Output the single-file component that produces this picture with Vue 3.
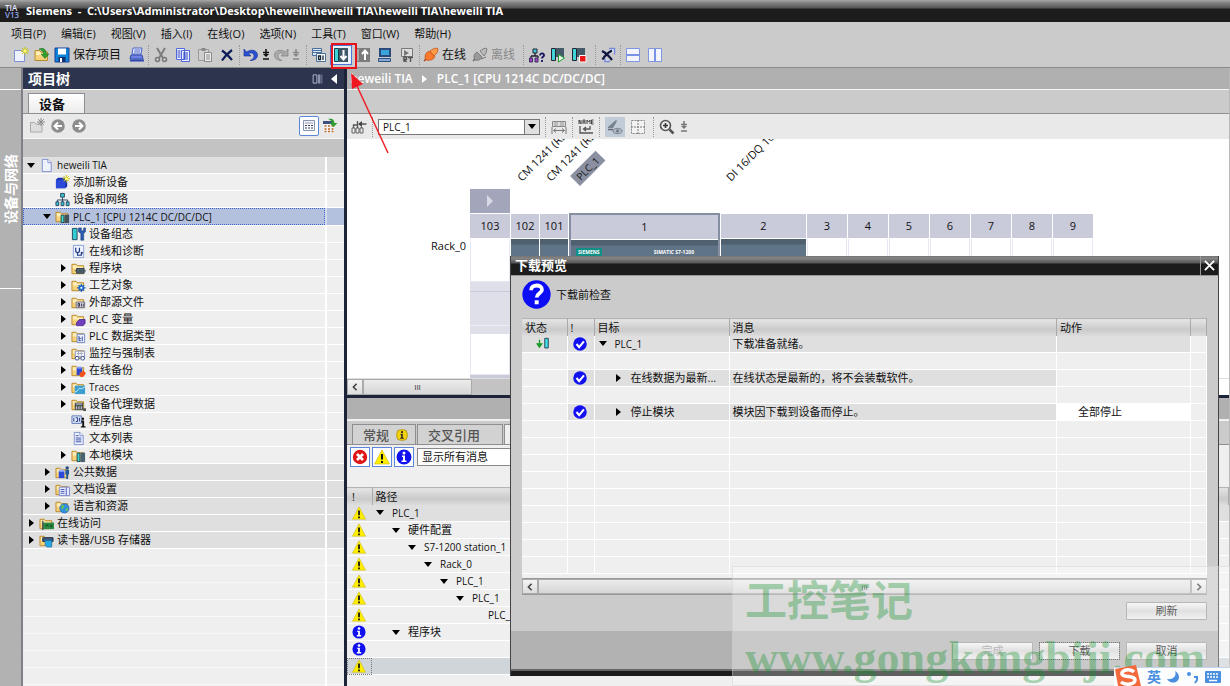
<script setup>
const folder = '<path d="M1 3.5h4.5l1.5 1.500h6.500v8.500h-12.500z" fill="#f6d27a" stroke="#b98a2c"/><path d="M2 4.500h3l1.500 1.500h6v2h-10.500z" fill="#fdeebb"/>'
const page = '<path d="M3.500 1.500h6l3.500 3.500v9.500h-9.500z" fill="#eef2ff" stroke="#7d8fd0"/><path d="M9.500 1.500v3.500h3.500" fill="#fff" stroke="#7d8fd0"/>'
const star = '<path d="M12 0v8M8 4h8M9.200 1.200l5.600 5.600M14.800 1.200l-5.600 5.600" stroke="#c9c400"/><circle cx="12" cy="4" r="1.600" fill="#ffff6a"/>'
const icons = {
  newProject: '<path d="M1.500 3.500h7l3 3v8h-10z" fill="#eef2ff" stroke="#7d8fd0"/>' + star,
  open: folder + '<path d="M5 2c5-2 7 1 7.500 5h2.500l-4 4.500-4-4.500h2.500c0-3-2-4-4.500-5z" fill="#2f9e2f" stroke="#1d6f1d" stroke-width=".5"/>',
  save: '<path d="M1 1h14v14h-14z" fill="#0b84d8" stroke="#1b3f9a"/><path d="M4 1.500h8v6h-8z" fill="#fff"/><path d="M4.500 10h7v5h-7z" fill="#15306f"/><path d="M6 11h2v4h-2z" fill="#fff"/>',
  print: '<path d="M4 1h9l-1 6h-9z" fill="#e9edff" stroke="#4a62c8"/><path d="M5.500 3h6M5 5h6" stroke="#4a62c8"/><path d="M2 8h11l1 4h-13z" fill="#6f83e0" stroke="#3048b0"/><path d="M1 12.500h14v2h-14z" fill="#2f45b0"/>',
  cut: '<path d="M4 1l6 10M12 1l-6 10" stroke="#7d7d7d" stroke-width="2"/><circle cx="4.500" cy="12.500" r="2" fill="none" stroke="#777" stroke-width="1.500"/><circle cx="11.500" cy="12.500" r="2" fill="none" stroke="#777" stroke-width="1.500"/>',
  copy: '<path d="M1.500 1.500h8v11h-8zM6.500 3.500h8v11h-8z" fill="#eef1ff" stroke="#5268d8"/><path d="M8 6h5M8 8h5M8 10h5M8 12h5M2.500 4h3M2.500 6h3M2.500 8h3M2.500 10h3" stroke="#3047c8"/>',
  paste: '<path d="M1.500 2.500h10v11h-10z" fill="#cfcfcf" stroke="#999"/><path d="M4.500 1h4v3h-4z" fill="#888"/><path d="M7.500 5.500h7v9h-7z" fill="#eee" stroke="#888"/><path d="M9 8h4M9 10h4M9 12h4" stroke="#888"/>',
  del: '<path d="M3 3.500c3 2 7 6 10 9.500M13 3c-4 3-7 6-10 10.500" stroke="#0c1a5a" stroke-width="2.200" fill="none"/>',
  undo: '<path d="M1 2v7h7l-2.500-2.500c3-1.500 5.500 0 5.500 2.500 0 2-1.500 3.500-4 4.500 5 0 7.500-2 7.500-5.500 0-4.500-6-6.500-11-3z" fill="#2c50d4" stroke="#17308f" stroke-width=".6"/>',
  redo: '<path d="M15 2v7h-7l2.500-2.500c-3-1.500-5.500 0-5.500 2.500 0 2 1.500 3.500 4 4.500-5 0-7.500-2-7.500-5.500 0-4.500 6-6.500 11-3z" fill="#aaa" stroke="#777" stroke-width=".6"/>',
  compile: '<path d="M1.500 1.500h9v7h-9z" fill="#dbe8f8" stroke="#4a6f98"/><path d="M2 3.500h8M2 5.500h8" stroke="#4a6f98"/><path d="M5.500 6.500h9v8h-9z" fill="#fff" stroke="#4a6f98"/><path d="M7.500 9h2v3.500h-2zM12 8.500v4.500" fill="none" stroke="#123" stroke-width="1.300"/>',
  download: '<path d="M1.500 1.500h4v13h-4z" fill="#3fd5d8" stroke="#123f4a"/><path d="M6 1h9v14h-9z" fill="#3f5867"/><path d="M10.500 3v9M7.500 9l3 3.500 3-3.500" stroke="#fff" stroke-width="2" fill="none"/>',
  upload: '<path d="M1.500 1.500h3v13h-3z" fill="#aaa" stroke="#777"/><path d="M5 1h10v14h-10z" fill="#7c7c7c"/><path d="M10 13v-9M7 7l3-3.500 3 3.500" stroke="#fff" stroke-width="2" fill="none"/>',
  pc: '<path d="M2 1h12v9h-12z" fill="#294a7d"/><path d="M4 3h8v5h-8z" fill="#3ba4dc"/><path d="M1.500 11.500h12v3h-12z" fill="#86a8d6" stroke="#30527f"/>',
  rt: '<path d="M2.500 1.500h11v8h-11z" fill="#ddd" stroke="#777"/><path d="M5 3l5 3-5 3z" fill="#777"/><path d="M5 15v-5h2.500v2.500h-2.500l2.500 2.500M9 10.500h5M11.500 10.500v4.500" stroke="#555" stroke-width="1.400" fill="none"/>',
  online: '<path d="M1 14l3-3" stroke="#a33a10" stroke-width="1.500"/><path d="M2 10c0-3 2-5 4-6l6 5c-1 3-3 4-5 4-3 1-5 0-5-3z" fill="#f9792f" stroke="#c24a10" stroke-width=".7"/><path d="M7 4l3-2 4-1 1 1-1 4-3 3z" fill="#ff9b4a" stroke="#c24a10" stroke-width=".7"/>',
  offline: '<path d="M1 14l3-3" stroke="#666" stroke-width="1.500"/><path d="M2 10c0-2 1-4 3-5l5 5c-1 2-2 3-4 3-2 1-4 0-4-3z" fill="#9a9a9a" stroke="#666" stroke-width=".7"/><path d="M8 4l3-2 3-1 1 1-1 4-2 3z" fill="#bbb" stroke="#666" stroke-width=".7"/><path d="M9 12l5-2" stroke="#777"/>',
  reach: '<path d="M4 2h4v4h-4z" fill="#3ec8d0" stroke="#223"/><path d="M6 6v3M2 9h7M2 9v2M9 9v2" stroke="#223" stroke-width="1.300"/><path d="M.500 11h3v4h-3zM6 11h3v4h-3z" fill="#b040c0" stroke="#336"/><path d="M11 8.500c0-3 4.500-2.500 4 0-.3 1.500-2 1.200-2 3M13 13v2" stroke="#14145e" stroke-width="1.800" fill="none"/>',
  run: '<path d="M1.500 1.500h4v12h-4z" fill="#3fd5d8" stroke="#223"/><path d="M6 1h8v9h-8z" fill="#455a68"/><path d="M8.500 7.500l6 3.500-6 4z" fill="#dff5df" stroke="#2a9a3a"/>',
  stop: '<path d="M1.500 1.500h4v12h-4z" fill="#3fd5d8" stroke="#223"/><path d="M6 1h8v9h-8z" fill="#455a68"/><path d="M8.500 8.500h6.500v6.500h-6.500z" fill="#e81818" stroke="#fff"/>',
  crossRef: '<path d="M9 1.500h5.500v6M5 11.500v3h5" stroke="#7289d8" stroke-width="1.500" fill="#eef"/><path d="M2 4c4 2 7 5 10 9M12 3.500c-4 2-7 5-9.500 9" stroke="#0c1440" stroke-width="2.200" fill="none"/>',
  splitH: '<path d="M1.500 1.500h13v13h-13z" fill="#f2f5ff" stroke="#8095e0"/><path d="M2 8h12" stroke="#5070dc" stroke-width="1.500"/>',
  splitV: '<path d="M1.500 1.500h13v13h-13z" fill="#f2f5ff" stroke="#8095e0"/><path d="M8 2v12" stroke="#5070dc" stroke-width="1.500"/>',
  project: page,
  addDevice: '<path d="M1 5l2-2h10v9l-2 2h-10z" fill="#1630b0"/><path d="M1 5h10v9h-10z" fill="#2b49d8"/>' + star,
  network: '<path d="M6 1.500h4v4h-4z" fill="#35c8cf" stroke="#2a4260"/><path d="M8 6v3M2.500 11v-2.500h11v2.500M8 8v3" stroke="#2a4260" fill="none"/><path d="M1 10.500h3v4h-3zM6.500 10.500h3v4h-3zM12 10.500h3v4h-3z" fill="#35c8cf" stroke="#2a4260"/>',
  plc: folder + '<path d="M6.500 6.500h3v8h-3z" fill="#3fd5d8" stroke="#244"/><path d="M10 6h5v9h-5z" fill="#45525c"/>',
  config: '<path d="M1.500 1.500h5v12h-5z" fill="#35cbd2" stroke="#234a60"/><path d="M8 1v4l2.500 2v7h3v-7l2-2v-4l-2 0v3h-2.500v-3z" fill="#2a5bb0" stroke="#163a78" stroke-width=".6"/>',
  diag: '<path d="M2.500 1.500h11v13h-11z" fill="#eef3ff" stroke="#8aa0d8"/><path d="M5 4v3c0 3 4 3 4 0v-3M7 9v3h4v-2" stroke="#223a80" fill="none" stroke-width="1.300"/><circle cx="11.500" cy="9.500" r="1.200" fill="#223a80"/>',
  blocks: folder + '<path d="M6 8h8v5h-8z" fill="#56697a" stroke="#2c3b48"/><path d="M4 10.500h2M14 10.500h2M8 10.500h4" stroke="#2c3b48"/>',
  tech: folder + '<circle cx="11" cy="10.500" r="3" fill="#2e7fe0"/><path d="M11 6v9M6.500 10.500h9M8 7.500l6 6M14 7.500l-6 6" stroke="#1b5fc0" stroke-width="1.200"/><circle cx="11" cy="10.500" r="1.200" fill="#fff"/>',
  external: folder + '<path d="M5.500 7.500h9v6h-9z" fill="#eef" stroke="#667"/><path d="M7.500 9h1.500v3h-1.500zM11 9v3.500M13 9v3.500" stroke="#223" fill="none"/>',
  tags: folder + '<path d="M6 11l3-3h6v4l-2 2.500h-7z" fill="#7040c0" stroke="#40208a" stroke-width=".8"/>',
  types: folder + '<path d="M6.500 5.500h8v9h-8z" fill="#eef3ff" stroke="#6f88c8"/><path d="M8.500 7.500v5h2M8.500 10h2M12 8v5" stroke="#2a3f90" fill="none"/>',
  watch: folder + '<path d="M4.500 5.500h10v6h-10z" fill="#f2f4ff" stroke="#8a93b8"/><path d="M6 8h7M8 6v4M11 6v4" stroke="#aab"/><circle cx="6.500" cy="13" r="2" fill="#fff" stroke="#2f4a98"/><circle cx="12.500" cy="13" r="2" fill="#fff" stroke="#2f4a98"/>',
  backup: folder + '<path d="M6 5h6v8h-6z" fill="#3049d0"/><ellipse cx="9" cy="5" rx="3" ry="1.200" fill="#8aa0ff"/><path d="M9 11l4-3 3 3-3 4h-3z" fill="#f0541e"/>',
  traces: folder + '<path d="M4 6h11v9h-11z" fill="#3d9fd0"/><path d="M4 13c4-1 4-5 6-4s3-1 5-2" stroke="#d8f4ff" fill="none"/>',
  proxy: folder + '<path d="M4 6h9v8h-9z" fill="#4c5358"/><path d="M5.500 7.500h6M6 10v3M8.500 10v3M11 10v3" stroke="#dfe5e8"/><path d="M13 12h3v3h-3z" fill="#555"/>',
  info: '<path d="M1 2h10v8h-10z" fill="#dfe7fb" stroke="#5a74b8"/><path d="M3 4v4M5 4h2v4h-2M9 4v4" stroke="#223a80" fill="none"/><path d="M11 7h3v6h1.500v1.500h-5v-1.500h1.500v-4h-1z" fill="#111"/><circle cx="12.700" cy="5" r="1.300" fill="#111"/>',
  textList: page + '<path d="M5 5h3M5 7.500h6M5 9.500h6M5 11.500h6" stroke="#3a4ca8"/>',
  modules: folder + '<path d="M6.500 5.500h3v9h-3z" fill="#3fd5d8" stroke="#244"/><path d="M10 5h5v10h-5z" fill="#4a6472"/>',
  common: folder + '<path d="M4 6h6v8h-6z" fill="#2e48d8"/><ellipse cx="7" cy="6" rx="3" ry="1.300" fill="#9cb0ff"/><circle cx="13" cy="3" r="1.800" fill="#234a80"/><path d="M11 5h4v5h-1v5h-2v-5h-1z" fill="#235a98"/>',
  docs: folder + '<path d="M4.500 5.500h11v9h-11z" fill="#e6eaff" stroke="#7a88c8"/><path d="M6 8h4M6 10h4M6 12h4M12 6v8" stroke="#4a5cb0"/>',
  lang: folder + '<circle cx="10" cy="10" r="5" fill="#2f8fe0" stroke="#1b5fa8" stroke-width=".6"/><path d="M7 7c2-1 3 0 3 1s-2 1-2 3-2-1-1-4zM11 11c2-2 3-1 3 0s-1 2-2 2z" fill="#68c850"/>',
  access: folder + '<path d="M4 7h12v7h-12z" fill="#2d8a45"/><path d="M4 5v10" stroke="#555" stroke-width="1.500"/><path d="M7 9h3v2h-3zM12 9h2v3h-2z" fill="#145a26"/>',
  card: folder + '<path d="M4 5h11v4h-11z" fill="#3d5c80" stroke="#1c3350"/><path d="M6.500 8h7v7h-5l-2-2z" fill="#25a8e8" stroke="#11699c" stroke-width=".6"/>',
  folderNew: '<path d="M1.500 4.500h4l1.500 1.500h6v8h-11.500z" fill="#ddd" stroke="#aaa"/><path d="M12 0v8M8 4h8M9.200 1.200l5.600 5.600M14.800 1.200l-5.600 5.600" stroke="#888"/>',
  back: '<circle cx="8" cy="8" r="6.800" fill="#8d8d8d"/><path d="M12 8h-7M8 4.500l-3.500 3.500 3.500 3.500" stroke="#fff" stroke-width="2" fill="none"/>',
  forward: '<circle cx="8" cy="8" r="6.800" fill="#8d8d8d"/><path d="M4 8h7M8 4.500l3.500 3.500-3.500 3.500" stroke="#fff" stroke-width="2" fill="none"/>',
  list: '<path d="M2.500 2.500h11v10h-11z" fill="#f6f8ff" stroke="#8a93b0"/><path d="M4 5h8" stroke="#99a"/><path d="M4 7.500h2M7 7.500h2M10 7.500h2M4 10h2M7 10h2M10 10h2" stroke="#445"/>',
  overview: '<path d="M1 3h11v12h-11z" fill="#f0f2f8"/><path d="M1 3h11v3h-11z" fill="#3f5080"/><path d="M2.500 8h2M6 8h2M9.500 8h2M2.500 11h2M6 11h2M9.500 11h2M2.500 13.500h2M6 13.500h2M9.500 13.500h2" stroke="#c06a20" stroke-width="1.500"/><path d="M6 1c5-1 6 1 6.500 4h3l-4 4-4-4h2.500c0-2-1.500-3-4-4z" fill="#2f9e2f"/>',
  hw: '<path d="M1 9h3v5h-3zM5 9h3v5h-3zM9 9h3v5h-3z" fill="none" stroke="#666"/><path d="M2.500 9v-3h4M6.500 9v-7M10.500 9v-1M15.500 5h-6" stroke="#555" fill="none" stroke-width="1.300"/><path d="M11 2l-4 3 4 3z" fill="#444"/>',
  ruler: '<path d="M1.500 2.500h13v5h-13z" fill="#ddd" stroke="#888"/><path d="M4 3v4M6 3v4M10 3v4M12 3v4" stroke="#999"/><path d="M1 8v7M15 8v7M3 11.500h10M5 9.500l-2.500 2 2.500 2M11 9.500l2.500 2-2.500 2" stroke="#777" fill="none"/>',
  label: '<path d="M1 5v-4l2 4v-4M5 5v-4h2v4M5 3h2M9 5v-4l1.500 2 1.500-2v4M15.500 1h-2v4h2M13.500 3h2" stroke="#444" fill="none"/><path d="M2 7v7h13M12 7v3h-6M8 8l-2.500 2 2.500 2" stroke="#555" fill="none" stroke-width="1.300"/>',
  showImg: '<path d="M1 8l8-7 1 1-4 7h-5z" fill="#76828e"/><path d="M1 10.500h5" stroke="#667" stroke-width="1.500"/><ellipse cx="10.500" cy="12" rx="4.500" ry="2.600" fill="#aeb8c2" stroke="#7c8792"/><circle cx="10.500" cy="12" r="1.400" fill="#6a7680"/>',
  grid: '<path d="M1.500 1.500h13v13h-13z" fill="#f3f3f3" stroke="#888" stroke-dasharray="2 1"/><path d="M1 8h14M8 1v14" stroke="#777" stroke-dasharray="2 1"/>',
  zoomIn: '<circle cx="6.500" cy="6.500" r="5" fill="#eee" stroke="#555" stroke-width="1.600"/><path d="M4 6.500h5M6.500 4v5" stroke="#333" stroke-width="1.600"/><path d="M10.500 10.500l4 4" stroke="#555" stroke-width="2.500"/>',
  error: '<circle cx="8" cy="8" r="7.200" fill="#e01414"/><path d="M5 5l6 6M11 5l-6 6" stroke="#fff" stroke-width="2.800"/>',
  warn: '<path d="M8 1l7.500 14h-15z" fill="#ffee00" stroke="#c8b400" stroke-width=".6"/><path d="M8 5v5.500M8 12v2" stroke="#111" stroke-width="2"/>',
  note: '<circle cx="8" cy="8" r="7.500" fill="#1010f0"/><path d="M6 6.500h3v5h1.500v1.500h-5v-1.500h1.500v-3.500h-1z" fill="#fff"/><circle cx="8" cy="4" r="1.500" fill="#fff"/>',
  gold: '<rect x="1" y="1" width="14" height="14" rx="5" fill="#f2d210" stroke="#a88c00"/><path d="M6 6.500h3v5h1.500v1.500h-5v-1.500h1.500v-3.500h-1z" fill="#222"/><circle cx="8" cy="4.200" r="1.400" fill="#222"/>',
  ok: '<circle cx="8" cy="8" r="7.700" fill="#1010f0"/><path d="M4 8l3 3.500 5.500-6.500" stroke="#fff" stroke-width="2.400" fill="none"/>',
  load: '<path d="M4 3v7M1.500 8l2.500 3.500 2.500-3.500z" stroke="#1b9a2a" fill="#1b9a2a" stroke-width="1.500"/><path d="M10 1.500h4v11h-4z" fill="#3fe0e8" stroke="#234"/>',
  question: '<circle cx="8" cy="8" r="7.800" fill="#0c0cf5"/><path d="M5 5.600c0-3.500 6.200-3.300 6-.2-.1 1.900-2.900 2-2.900 4.200" stroke="#fff" stroke-width="2.100" fill="none"/><path d="M7 11.200h2.200v2.200h-2.200z" fill="#fff"/>',
  pin: '<path d="M1.500 2.500h5v11h-5z" fill="none" stroke="#d4daea"/><path d="M8 2h3v12h-3z" fill="#8b93ac"/><path d="M11 2h3v12h-3z" fill="#5c6582"/>'
}

const menus = ['项目(P)', '编辑(E)', '视图(V)', '插入(I)', '在线(O)', '选项(N)', '工具(T)', '窗口(W)', '帮助(H)']

const toolGroups = [
  { n: 'file', b: [{ i: 'newProject' }, { i: 'open' }, { i: 'save', t: '保存项目' }, { i: 'print' }] },
  { n: 'edit', b: [{ i: 'cut' }, { i: 'copy' }, { i: 'paste' }, { i: 'del' }] },
  { n: 'history', b: [{ i: 'undo' }, { d: true }, { i: 'redo' }, { d: true, off: true }] },
  { n: 'load', b: [{ i: 'compile' }, { i: 'download', hot: true }, { i: 'upload' }, { i: 'pc' }, { i: 'rt' }] },
  { n: 'connect', b: [{ i: 'online', t: '在线' }, { i: 'offline', t: '离线', off: true }] },
  { n: 'device', b: [{ i: 'reach' }, { i: 'run' }, { i: 'stop' }] },
  { n: 'refs', b: [{ i: 'crossRef' }] },
  { n: 'split', b: [{ i: 'splitH' }, { i: 'splitV' }] }
]

const tree = [
  { l: 0, a: 'open', i: 'project', t: 'heweili TIA', g: true },
  { l: 1, i: 'addDevice', t: '添加新设备' },
  { l: 1, i: 'network', t: '设备和网络' },
  { l: 1, a: 'open', i: 'plc', t: 'PLC_1 [CPU 1214C DC/DC/DC]', sel: true },
  { l: 2, i: 'config', t: '设备组态' },
  { l: 2, i: 'diag', t: '在线和诊断' },
  { l: 2, a: 'shut', i: 'blocks', t: '程序块' },
  { l: 2, a: 'shut', i: 'tech', t: '工艺对象' },
  { l: 2, a: 'shut', i: 'external', t: '外部源文件' },
  { l: 2, a: 'shut', i: 'tags', t: 'PLC 变量' },
  { l: 2, a: 'shut', i: 'types', t: 'PLC 数据类型' },
  { l: 2, a: 'shut', i: 'watch', t: '监控与强制表' },
  { l: 2, a: 'shut', i: 'backup', t: '在线备份' },
  { l: 2, a: 'shut', i: 'traces', t: 'Traces' },
  { l: 2, a: 'shut', i: 'proxy', t: '设备代理数据' },
  { l: 2, i: 'info', t: '程序信息' },
  { l: 2, i: 'textList', t: '文本列表' },
  { l: 2, a: 'shut', i: 'modules', t: '本地模块' },
  { l: 1, a: 'shut', i: 'common', t: '公共数据', g: true },
  { l: 1, a: 'shut', i: 'docs', t: '文档设置', g: true },
  { l: 1, a: 'shut', i: 'lang', t: '语言和资源', g: true },
  { l: 0, a: 'shut', i: 'access', t: '在线访问', g: true },
  { l: 0, a: 'shut', i: 'card', t: '读卡器/USB 存储器', g: true }
]

const slots = ['103', '102', '101', '1', '2', '3', '4', '5', '6', '7', '8', '9']
const moduleSlots = ['102', '101', '1', '2']

const messages = [
  { l: 0, i: 'warn', t: 'PLC_1', g: true },
  { l: 1, i: 'warn', t: '硬件配置' },
  { l: 2, i: 'warn', t: 'S7-1200 station_1' },
  { l: 3, i: 'warn', t: 'Rack_0' },
  { l: 4, i: 'warn', t: 'PLC_1' },
  { l: 5, i: 'warn', t: 'PLC_1' },
  { l: 6, i: 'warn', t: 'PLC_1', leaf: true },
  { l: 1, i: 'note', t: '程序块' },
  { l: 1, i: 'note', t: '', leaf: true },
  { l: 1, i: 'warn', t: '', leaf: true, sel: true }
]

const checks = [
  { s: 'load', ok: true, a: 'open', l: 0, t: 'PLC_1', m: '下载准备就绪。', kind: 'top' },
  {},
  { ok: true, a: 'shut', l: 1, t: '在线数据为最新...', m: '在线状态是最新的，将不会装载软件。', kind: 'sub' },
  {},
  { ok: true, a: 'shut', l: 1, t: '停止模块', m: '模块因下载到设备而停止。', act: '全部停止', kind: 'sub' },
  {}, {}, {}, {}, {}, {}, {}, {}, {}
]
</script>

<template>
  <div class="app">
    <header class="titlebar">
      <span class="logo"><b>TIA</b><b class="ver">V13</b></span>
      <h1>Siemens&nbsp; -&nbsp; C:\Users\Administrator\Desktop\heweili\heweili TIA\heweili TIA\heweili TIA</h1>
    </header>

    <nav class="menubar">
      <button v-for="m in menus" :key="m" type="button">{{ m }}</button>
    </nav>

    <div class="toolbar">
      <div v-for="g in toolGroups" :key="g.n" class="group" :class="g.n">
        <button v-for="(b, bi) in g.b" :key="bi" type="button" :class="{ drop: b.d, off: b.off, hot: b.hot }" :aria-label="b.t || b.i || 'more'">
          <svg v-if="b.i" class="ico" viewBox="0 0 16 16" v-html="icons[b.i]" />
          <svg v-else class="pm" viewBox="0 0 8 12"><path d="M4 0v6M1 3.500h6M1 10h6" stroke="currentColor" stroke-width="1.500" /><path d="M1 5h6l-3 3z" fill="currentColor" /></svg>
          <span v-if="b.t">{{ b.t }}</span>
        </button>
      </div>
    </div>

    <main class="work">
      <aside class="rail"><div class="rail-top"></div><button type="button">设备与网络</button></aside>

      <section class="tree-panel">
        <header class="panel-head">
          <h2>项目树</h2>
          <svg class="ico" viewBox="0 0 16 16" v-html="icons.pin" />
          <svg class="collapse" viewBox="0 0 8 12"><path d="M7 1v10l-6-5z" fill="#fff" /></svg>
        </header>
        <div class="tabs"><button type="button" class="tab active">设备</button></div>
        <div class="tree-tools">
          <button v-for="n in ['folderNew', 'back', 'forward']" :key="n" type="button" :aria-label="n"><svg class="ico" viewBox="0 0 16 16" v-html="icons[n]" /></button>
          <span class="grow"></span>
          <button type="button" class="framed" aria-label="list"><svg class="ico" viewBox="0 0 16 16" v-html="icons.list" /></button>
          <button type="button" aria-label="overview"><svg class="ico" viewBox="0 0 16 16" v-html="icons.overview" /></button>
        </div>
        <div class="strip"></div>
        <ul class="tree">
          <li v-for="n in tree" :key="n.t" :class="{ cat: n.g, sel: n.sel }">
            <div class="node" :class="'lv' + n.l">
              <i class="arrow" :class="n.a"></i>
              <svg class="ico" viewBox="0 0 16 16" v-html="icons[n.i]" />
              <span :class="{ latin: /^[\x20-\x7e]+$/.test(n.t) }">{{ n.t }}</span>
            </div>
            <div class="side"></div>
          </li>
        </ul>
        <div class="filler"><div></div><div class="side"></div></div>
      </section>

      <section class="editor">
        <header class="crumbs"><span>heweili TIA</span><i class="arrow shut"></i><span>PLC_1 [CPU 1214C DC/DC/DC]</span></header>
        <div class="tabs wide"></div>
        <div class="edit-tools">
          <svg class="ico" viewBox="0 0 16 16" v-html="icons.hw" />
          <span class="dots"></span>
          <span class="combo"><select aria-label="设备"><option>PLC_1</option></select><i><b></b></i></span>
          <span class="dots"></span>
          <svg class="ico" viewBox="0 0 16 16" v-html="icons.ruler" />
          <span class="dots"></span>
          <svg class="ico" viewBox="0 0 16 16" v-html="icons.label" />
          <span class="dots"></span>
          <button type="button" class="pressed" aria-label="image"><svg class="ico" viewBox="0 0 16 16" v-html="icons.showImg" /></button>
          <svg class="ico" viewBox="0 0 16 16" v-html="icons.grid" />
          <span class="dots"></span>
          <svg class="ico" viewBox="0 0 16 16" v-html="icons.zoomIn" />
          <svg class="pm grey" viewBox="0 0 8 12"><path d="M4 0v6M1 3.500h6M1 10h6" stroke="currentColor" stroke-width="1.500" /><path d="M1 5h6l-3 3z" fill="currentColor" /></svg>
        </div>
        <div class="canvas">
          <span class="tag t102">CM 1241 (RS232)_1</span>
          <span class="tag t101">CM 1241 (RS485)_1</span>
          <span class="tag plc">PLC_1</span>
          <span class="tag t2">DI 16/DQ 16x24VDC_1</span>
          <div class="rack">
            <div class="rack-name">Rack_0</div>
            <div class="rack-grid">
              <div class="expand"><svg viewBox="0 0 8 14"><path d="M1 1v12l6-6z" fill="#d8d8e6" /></svg></div>
              <div v-for="s in slots" :key="s" class="slot" :class="{ picked: s === '1' }">
                <div class="num">{{ s }}</div>
                <div class="bay" :class="{ module: moduleSlots.includes(s) }">
                  <template v-if="s === '1'"><em>SIEMENS</em><em class="model">SIMATIC S7-1200</em></template>
                </div>
                <template v-if="s === '103'"><div class="rail-band"></div><div class="bay"></div><div class="num next"></div></template>
              </div>
            </div>
          </div>
        </div>
        <div class="hscroll"><button type="button" aria-label="left"><svg viewBox="0 0 8 10"><path d="M6 1l-4 4 4 4" stroke="#444" stroke-width="2" fill="none" /></svg></button><div class="thumb">III</div></div>

        <section class="inspector">
          <div class="band"></div>
          <div class="itabs">
            <button type="button">常规 <svg class="ico" viewBox="0 0 16 16" v-html="icons.gold" /></button>
            <button type="button">交叉引用</button>
            <button type="button" class="active">编译</button>
          </div>
          <div class="filters">
            <button v-for="n in ['error', 'warn', 'note']" :key="n" type="button" :aria-label="n"><svg class="ico" viewBox="0 0 16 16" v-html="icons[n]" /></button>
            <select aria-label="消息过滤"><option>显示所有消息</option></select>
          </div>
          <table class="messages">
            <thead><tr><th class="mark">!</th><th>路径</th></tr></thead>
            <tbody>
              <tr v-for="(m, k) in messages" :key="k" :class="{ cat: m.g, sel: m.sel }">
                <td class="mark"><svg class="ico" viewBox="0 0 16 16" v-html="icons[m.i]" /></td>
                <td><div class="node" :class="'lv' + m.l"><i class="arrow" :class="m.leaf ? '' : 'open'"></i><span :class="{ latin: /^[\x20-\x7e]+$/.test(m.t) }">{{ m.t }}</span></div></td>
              </tr>
            </tbody>
          </table>
        </section>
      </section>
    </main>

    <div class="dialog" role="dialog" aria-label="下载预览">
      <header class="dlg-title"><h2>下载预览</h2><button type="button" aria-label="关闭"><svg viewBox="0 0 12 12"><path d="M1 1l10 10M11 1l-10 10" stroke="#fff" stroke-width="2" /></svg></button></header>
      <div class="dlg-body">
        <div class="intro"><svg viewBox="0 0 16 16" v-html="icons.question" /><span>下载前检查</span></div>
        <div class="sheet">
          <table>
            <colgroup><col class="c1" /><col class="c2" /><col class="c3" /><col /><col class="c5" /><col class="c6" /></colgroup>
            <thead><tr><th>状态</th><th>!</th><th>目标</th><th>消息</th><th>动作</th><th></th></tr></thead>
            <tbody>
              <tr v-for="(r, k) in checks" :key="k" :class="r.kind">
                <td><svg v-if="r.s" class="ico load" viewBox="0 0 16 16" v-html="icons[r.s]" /></td>
                <td><svg v-if="r.ok" class="ico tick" viewBox="0 0 16 16" v-html="icons.ok" /></td>
                <td><div v-if="r.t" class="node" :class="'lv' + r.l"><i class="arrow" :class="r.a"></i><span :class="{ latin: r.t === 'PLC_1' }">{{ r.t }}</span></div></td>
                <td class="msg">{{ r.m }}</td>
                <td :class="{ act: r.act }">{{ r.act }}</td>
                <td></td>
              </tr>
            </tbody>
          </table>
        </div>
        <div class="hscroll dlg-scroll"><button type="button" aria-label="left"><svg viewBox="0 0 8 10"><path d="M6 1l-4 4 4 4" stroke="#444" stroke-width="2" fill="none" /></svg></button><div class="thumb">III</div><button type="button" aria-label="right"><svg viewBox="0 0 8 10"><path d="M2 1l4 4-4 4" stroke="#444" stroke-width="2" fill="none" /></svg></button></div>
        <div class="actions"><button type="button">刷新</button></div>
      </div>
      <footer class="actions foot"><button type="button" disabled>完成</button><button type="button" class="focus">下载</button><button type="button">取消</button></footer>
    </div>

    <div class="watermark"><p>工控笔记</p><p class="site">www.gongkongbiji.com</p></div>

    <svg class="pointer" viewBox="0 0 60 116">
      <path d="M2 2h24v24h-24z" fill="none" stroke="#e8141c" stroke-width="2" />
      <path d="M27 44l31 67" stroke="#f02028" stroke-width="1.500" />
      <path d="M21 31l12 11-11 5z" fill="#f01820" />
    </svg>

    <div class="ime">
      <svg class="sogou" viewBox="0 0 28 24"><path d="M1 4l21-4 5 21-22 5z" fill="#f26a3c" /><path d="M20 7c-4-4-13-2-12 2 1 4 13 1 13 6 0 4-9 6-14 2" stroke="#fff" stroke-width="3.500" fill="none" /></svg>
      <span>英</span>
      <svg class="moon" viewBox="0 0 14 14"><path d="M9 1c2 5-2 9-8 8 4 6 12 4 12-2 0-3-2-5-4-6z" fill="#4b8fe0" /></svg>
      <svg class="moon" viewBox="0 0 14 14"><circle cx="4" cy="4" r="2" fill="#4b8fe0" /><path d="M9 7h3v3l-2 3" stroke="#4b8fe0" stroke-width="2" fill="none" /></svg>
      <svg class="keys" viewBox="0 0 18 14"><rect x="1" y="1" width="16" height="12" rx="1" fill="#4b8fe0" /><path d="M3 4h12M3 7h12" stroke="#fff" stroke-width="1.500" stroke-dasharray="2 1" /><path d="M5 10.500h8" stroke="#fff" stroke-width="1.500" /></svg>
    </div>
  </div>
</template>

<style>
body { background: #efefef; }
</style>

<style scoped>
* { box-sizing: border-box; margin: 0; }
.app { position: relative; display: flex; flex-direction: column; height: 100vh; overflow: hidden; background: #cbcbcb; color: #111; font: 11px/16px "Open Sans", "Noto Sans CJK SC", sans-serif; }
button, select { font: inherit; color: inherit; border: 0; background: none; padding: 0; }
.ico { width: 16px; height: 16px; flex: none; display: block; }
.latin { font-size: 10px; }
.grow { flex: 1; }

.titlebar { flex: none; height: 22px; display: flex; align-items: center; gap: 5px; padding-left: 5px; background: linear-gradient(#a0a0a0 0 1px, #8a8a8a 2px, #555 8px, #1c1c1c 9px); color: #fff; }
.titlebar h1 { font-size: 11px; line-height: 20px; font-weight: 700; white-space: nowrap; }
.logo { display: grid; width: 16px; font-size: 8px; line-height: 7px; color: #e4e8ff; }
.logo b { font-weight: 600; }
.logo .ver { color: #8ea0e8; }

.menubar { flex: none; height: 23px; display: flex; align-items: center; gap: 15px; padding-left: 11px; }
.toolbar { flex: none; height: 23px; display: flex; align-items: flex-start; padding-left: 9px; border-bottom: 1px solid #8a8a8a; }
.group { display: flex; align-items: center; height: 20px; padding: 0 1px; border-left: 1px dotted #999; }
.group button { display: flex; align-items: center; justify-content: center; gap: 3px; width: 22px; height: 20px; font-size: 12px; white-space: nowrap; }
.group.file { border-left: 0; }
.group.file button, .group.device button { width: 21px; }
.group.file button:nth-child(3), .group.connect button { width: auto; padding: 0 2px; }
.group.file button:nth-child(4) { margin-left: 3px; }
.group.history { padding-right: 5px; }
.group.history button { width: 20px; }
.group.history .drop { width: 10px; }
.group.connect { gap: 2px; padding-right: 6px; }
.group.device { padding: 0 6px 0 2px; }
.group button.off { color: #888; }
.group button.hot { background: #eef3fb; box-shadow: inset 0 0 0 1px #4a74d8; }
.pm { width: 8px; height: 12px; flex: none; }
.pm.grey { color: #777; }

.work { flex: 1; min-height: 0; display: flex; }
.rail { flex: none; width: 23px; background: #b2b2b2; border-right: 2px solid #808088; display: flex; flex-direction: column; align-items: center; }
.rail-top { width: 100%; height: 22px; border-bottom: 1px solid #fff; }
.rail button { width: 100%; height: 199px; display: flex; align-items: center; justify-content: center; writing-mode: vertical-rl; text-orientation: sideways; transform: rotate(180deg); border-top: 1px solid #fff; color: #fff; font-size: 14px; font-weight: 700; line-height: 20px; }

.tree-panel { flex: none; width: 324px; display: flex; flex-direction: column; border-right: 3px solid #1d2338; background: #efefef; }
.panel-head { flex: none; height: 22px; display: flex; align-items: center; gap: 6px; padding: 0 6px 0 5px; background: #2c344e; border-bottom: 1px solid #fff; color: #fff; }
.panel-head h2 { flex: 1; font-size: 14px; line-height: 20px; font-weight: 700; }
.panel-head .ico { width: 12px; height: 12px; }
.collapse { width: 8px; height: 12px; }
.tabs { flex: none; height: 24px; display: flex; align-items: flex-end; padding-left: 5px; background: #cbcbcb; border-bottom: 1px solid #8f8f8f; }
.tab { width: 57px; height: 20px; padding-right: 9px; background: linear-gradient(#fff, #ececec); border: 1px solid #8f8f8f; border-bottom: 0; font-size: 13px; font-weight: 700; line-height: 18px; }
.tree-tools { flex: none; height: 25px; display: flex; align-items: center; gap: 1px; padding: 0 4px; background: #e9e9e9; border-bottom: 1px solid #f6f6f6; }
.tree-tools button { display: flex; align-items: center; justify-content: center; width: 20px; height: 20px; }
.tree-tools .framed { border: 1px solid #5b86dc; border-radius: 2px; background: #fff; }
.strip { flex: none; height: 18px; background: #c3c3c3; }
.tree { flex: none; padding: 0; list-style: none; }
.tree li { display: flex; height: 17px; border-bottom: 1px solid #fff; background: #efefef; }
.tree li.cat { background: #dfdfdf; }
.tree li.sel { height: 18px; background: #b4c1de; }
.tree li.sel .node { outline: 1px dotted #3a62c8; outline-offset: -1px; }
.tree .sel .side { border-color: #d3dbee; }
.node { flex: 1; display: flex; align-items: center; min-width: 0; height: 16px; line-height: 16px; white-space: nowrap; }
.tree .node .ico { margin-right: 3px; width: 15px; height: 15px; }
.tree .sel .node { height: 17px; }
.lv1 { padding-left: 16px; }
.lv2 { padding-left: 32px; }
.lv3 { padding-left: 48px; }
.lv4 { padding-left: 64px; }
.lv5 { padding-left: 80px; }
.lv6 { padding-left: 96px; }
.side { flex: none; width: 19px; border-left: 2px solid #fff; }
.arrow { flex: none; width: 16px; display: flex; justify-content: center; }
.arrow::before { content: ""; border: 4px solid transparent; }
.arrow.open::before { border-top: 5px solid #000; border-bottom: 0; }
.arrow.shut::before { border-left: 5px solid #000; border-right: 0; }
.filler { flex: 1; display: flex; justify-content: space-between; background: repeating-linear-gradient(#efefef 0 16px, #f8f8f8 16px 17px); }

.editor { flex: 1; min-width: 0; display: flex; flex-direction: column; border-right: 1px solid #b8b8b8; background: #fff; }
.crumbs { flex: none; height: 22px; display: flex; align-items: center; gap: 4px; padding-left: 3px; background: #b0b0b0; border-bottom: 1px solid #f4f4f4; color: #fff; font-size: 12px; font-weight: 600; white-space: nowrap; }
.crumbs .arrow::before { border-left-color: #fff; }
.edit-tools { flex: none; height: 25px; display: flex; align-items: center; gap: 5px; padding-left: 4px; background: #e9e9e9; }
.dots { width: 1px; height: 20px; border-left: 1px dotted #999; }
.combo { display: flex; width: 162px; height: 16px; border: 1px solid #777; background: #fff; }
.combo select { flex: 1; appearance: none; padding-left: 4px; font-size: 10px; line-height: 14px; }
.combo i { width: 15px; display: flex; align-items: center; justify-content: center; border-left: 1px solid #777; background: #e0e0e0; }
.combo b { border: 4px solid transparent; border-top: 5px solid #000; border-bottom: 0; }
.pressed { width: 20px; height: 20px; display: flex; align-items: center; justify-content: center; background: #c2ccd8; }
.edit-tools > .dots:nth-last-child(3) { margin-left: 2px; }

.canvas { position: relative; flex: 1; min-height: 0; overflow: hidden; background: #fff; }
.tag { position: absolute; top: 31px; line-height: 14px; font-size: 11px; white-space: nowrap; transform-origin: 0 100%; transform: rotate(-45deg); }
.t102 { left: 177px; }
.t101 { left: 206px; }
.t2 { left: 386px; }
.plc { left: 233px; top: 33px; width: 36px; padding-left: 4px; background: #8a90a2; font-size: 10px; }
.rack { display: flex; padding: 50px 0 0 84px; }
.rack-name { flex: none; width: 39px; padding-top: 49px; }
.rack-grid { display: grid; grid-template-columns: 40px 28px 28px 151px 85px repeat(7, 40px); grid-template-rows: 24px auto; column-gap: 1px; row-gap: 1px; }
.expand { grid-column: 1 / -1; width: 40px; display: flex; align-items: center; justify-content: center; background: #a3a6bb; }
.expand svg { width: 8px; height: 14px; }
.num { height: 24px; line-height: 23px; text-align: center; background: #c9cada; }
.bay { height: 43px; margin-top: 1px; border: 1px solid #e8e8f2; border-top: 0; }
.bay.module { display: flex; justify-content: space-between; padding: 8px 22px 0 5px; border: 0; background: linear-gradient(#4f606f 0 5px, #5f7487 6px); }
.picked { margin-top: -1px; border: 2px solid #868fa2; border-bottom: 0; }
.bay em { height: 10px; padding: 0 2px; font-style: normal; font-size: 5px; line-height: 9px; font-weight: 700; color: #fff; background: #129088; }
.bay em.model { background: none; }
.rail-band { height: 52px; background: linear-gradient(#dfdfe9 0 9px, #c8c8d6 9px 10px, #dfdfe9 10px 43px, #ececf2 43px 44px, #dfdfe9 44px); }
.rail-band + .bay { height: 41px; margin-top: 0; }

.hscroll { flex: none; display: flex; height: 17px; background: linear-gradient(90deg, #c3c3c3 50%, #fff 50%); border-top: 1px solid #ddd; }
.hscroll button { flex: none; width: 16px; display: flex; align-items: center; justify-content: center; border: 1px solid #aaa; background: linear-gradient(#f4f4f4, #ddd); }
.hscroll svg { width: 8px; height: 8px; }
.thumb { flex: none; width: 109px; border: 1px solid #aaa; background: linear-gradient(#ececec, #d6d6d6); text-align: center; font-size: 8px; line-height: 14px; color: #333; }

.inspector { flex: none; height: 291px; border-top: 3px solid #1d2338; background: #efefef; overflow: hidden; }
.band { height: 23px; background: #b0b0b0; border-bottom: 2px solid #f0f0f0; }
.itabs { height: 24px; display: flex; align-items: flex-end; gap: 1px; padding-left: 5px; background: #cbcbcb; border-bottom: 1px solid #8f8f8f; }
.itabs button { width: 64px; height: 20px; display: flex; align-items: center; gap: 7px; padding-left: 10px; border: 1px solid #8f8f8f; border-bottom: 0; background: #d2d2d2; color: #555; font-size: 13px; font-weight: 500; white-space: nowrap; }
.itabs button + button { width: 86px; }
.itabs .active { background: #efefef; }
.itabs .ico { width: 12px; height: 12px; }
.filters { height: 42px; display: flex; align-items: flex-start; gap: 2px; padding: 2px 3px; }
.filters button { width: 20px; height: 20px; display: flex; align-items: center; justify-content: center; border: 1px solid #5b86dc; background: #fff; }
.filters select { appearance: none; width: 200px; height: 18px; margin: 1px; padding-left: 4px; border: 1px solid #888; background: #fff; font-size: 11px; }
.messages { width: 100%; table-layout: fixed; border-collapse: collapse; }
th { height: 17px; padding: 0 0 0 3px; border-right: 1px solid #aaa; border-top: 1px solid #b4b4b4; background: linear-gradient(#e4e4e4, #cacaca 60%, #dedede); font-size: 11px; line-height: 15px; font-weight: 400; text-align: left; }
td { height: 17px; padding: 0; line-height: 16px; border-bottom: 1px solid #fff; white-space: nowrap; overflow: hidden; }
.mark { width: 25px; }
th.mark { padding-left: 5px; }
.messages td .ico { width: 14px; height: 14px; margin-left: 5px; }
.messages .arrow { margin-right: 4px; }
.messages .cat { background: #dfdfdf; }
.messages .sel { background: #d0d5d9; }
.messages .sel .mark { outline: 1px dotted #777; outline-offset: -1px; }

.dialog { position: absolute; left: 510px; right: 11px; top: 256px; bottom: 10px; display: flex; flex-direction: column; background: #cbcbcb; border: 1px solid #444; border-width: 0 1px 0; }
.dlg-title { flex: none; height: 20px; display: flex; background: linear-gradient(#777 0 1px, #888 2px, #555 7px, #1c1c1c 8px); color: #fff; border-bottom: 1px solid #999; }
.dlg-title h2 { flex: 1; padding-left: 4px; font-size: 13px; line-height: 19px; font-weight: 700; }
.dlg-title button { width: 18px; display: flex; align-items: center; justify-content: center; border-left: 1px solid #999; }
.dlg-title svg { width: 11px; height: 11px; }
.dlg-body { flex: 1; min-height: 0; display: flex; flex-direction: column; padding: 4px 11px 11px; }
.intro { height: 38px; display: flex; align-items: flex-start; gap: 5px; }
.intro svg { width: 29px; height: 29px; }
.intro span { line-height: 29px; }
.sheet { flex: 1; min-height: 0; overflow: hidden; background: #efefef; }
.sheet table { width: 100%; table-layout: fixed; border-collapse: collapse; }
.c1 { width: 45px; } .c2 { width: 27px; } .c3 { width: 135px; } .c5 { width: 134px; } .c6 { width: 16px; }
.sheet td { border-right: 1px solid #fff; }
.sheet td .ico { width: 14px; height: 14px; margin: 0 0 0 5px; }
.sheet td .load { margin-left: 14px; }
.sheet .msg { padding-left: 3px; }
.top td:not(:last-child), .sub td:not(:first-child):nth-child(-n+4) { background: #dfdfdf; }
.sheet td.act { padding-left: 21px; background: #fff; }
.sheet .lv1 { padding-left: 16px; }
.sheet .arrow { margin-right: 4px; }
.dlg-scroll { background: #d0d0d0; border: 1px solid #999; border-width: 1px 0; }
.dlg-scroll .thumb { flex: 1; }
.actions { flex: none; display: flex; justify-content: flex-end; gap: 6px; padding-top: 7px; }
.actions button { width: 81px; height: 18px; border: 1px solid #999; border-radius: 1px; background: linear-gradient(#f2f2f2, #d4d4d4 50%, #ebebeb); line-height: 16px; }
.actions button:disabled { color: #999; }
.actions .focus { outline: 1px dotted #444; outline-offset: -1px; }
.foot { height: 45px; padding: 11px 11px 0; background: #b2b2b2; border-bottom: 5px solid #1c1c1c; box-shadow: inset 0 -2px #666; }

.watermark { position: absolute; left: 732px; right: 0; top: 566px; bottom: 0; overflow: hidden; padding: 9px 0 0 12px; background: rgba(255, 255, 255, .3); border: 1px solid rgba(200, 200, 200, .4); color: rgba(20, 145, 45, .36); font-family: "Liberation Serif", "Noto Sans CJK SC", serif; font-weight: 700; white-space: nowrap; }
.watermark p { font-size: 42px; line-height: 52px; }
.watermark .site { font-size: 46px; line-height: 60px; }
.pointer { position: absolute; left: 330px; top: 42px; width: 60px; height: 116px; }
.ime { position: absolute; right: 0; bottom: 0; height: 19px; width: 116px; display: flex; align-items: center; gap: 5px; background: #fbfdff; border-top: 1px solid #c4d4ea; color: #4b8fe0; font-size: 14px; line-height: 18px; font-weight: 700; }
.sogou { flex: none; width: 28px; height: 24px; }
.moon { flex: none; width: 14px; height: 14px; }
.keys { flex: none; width: 18px; height: 14px; }
</style>
